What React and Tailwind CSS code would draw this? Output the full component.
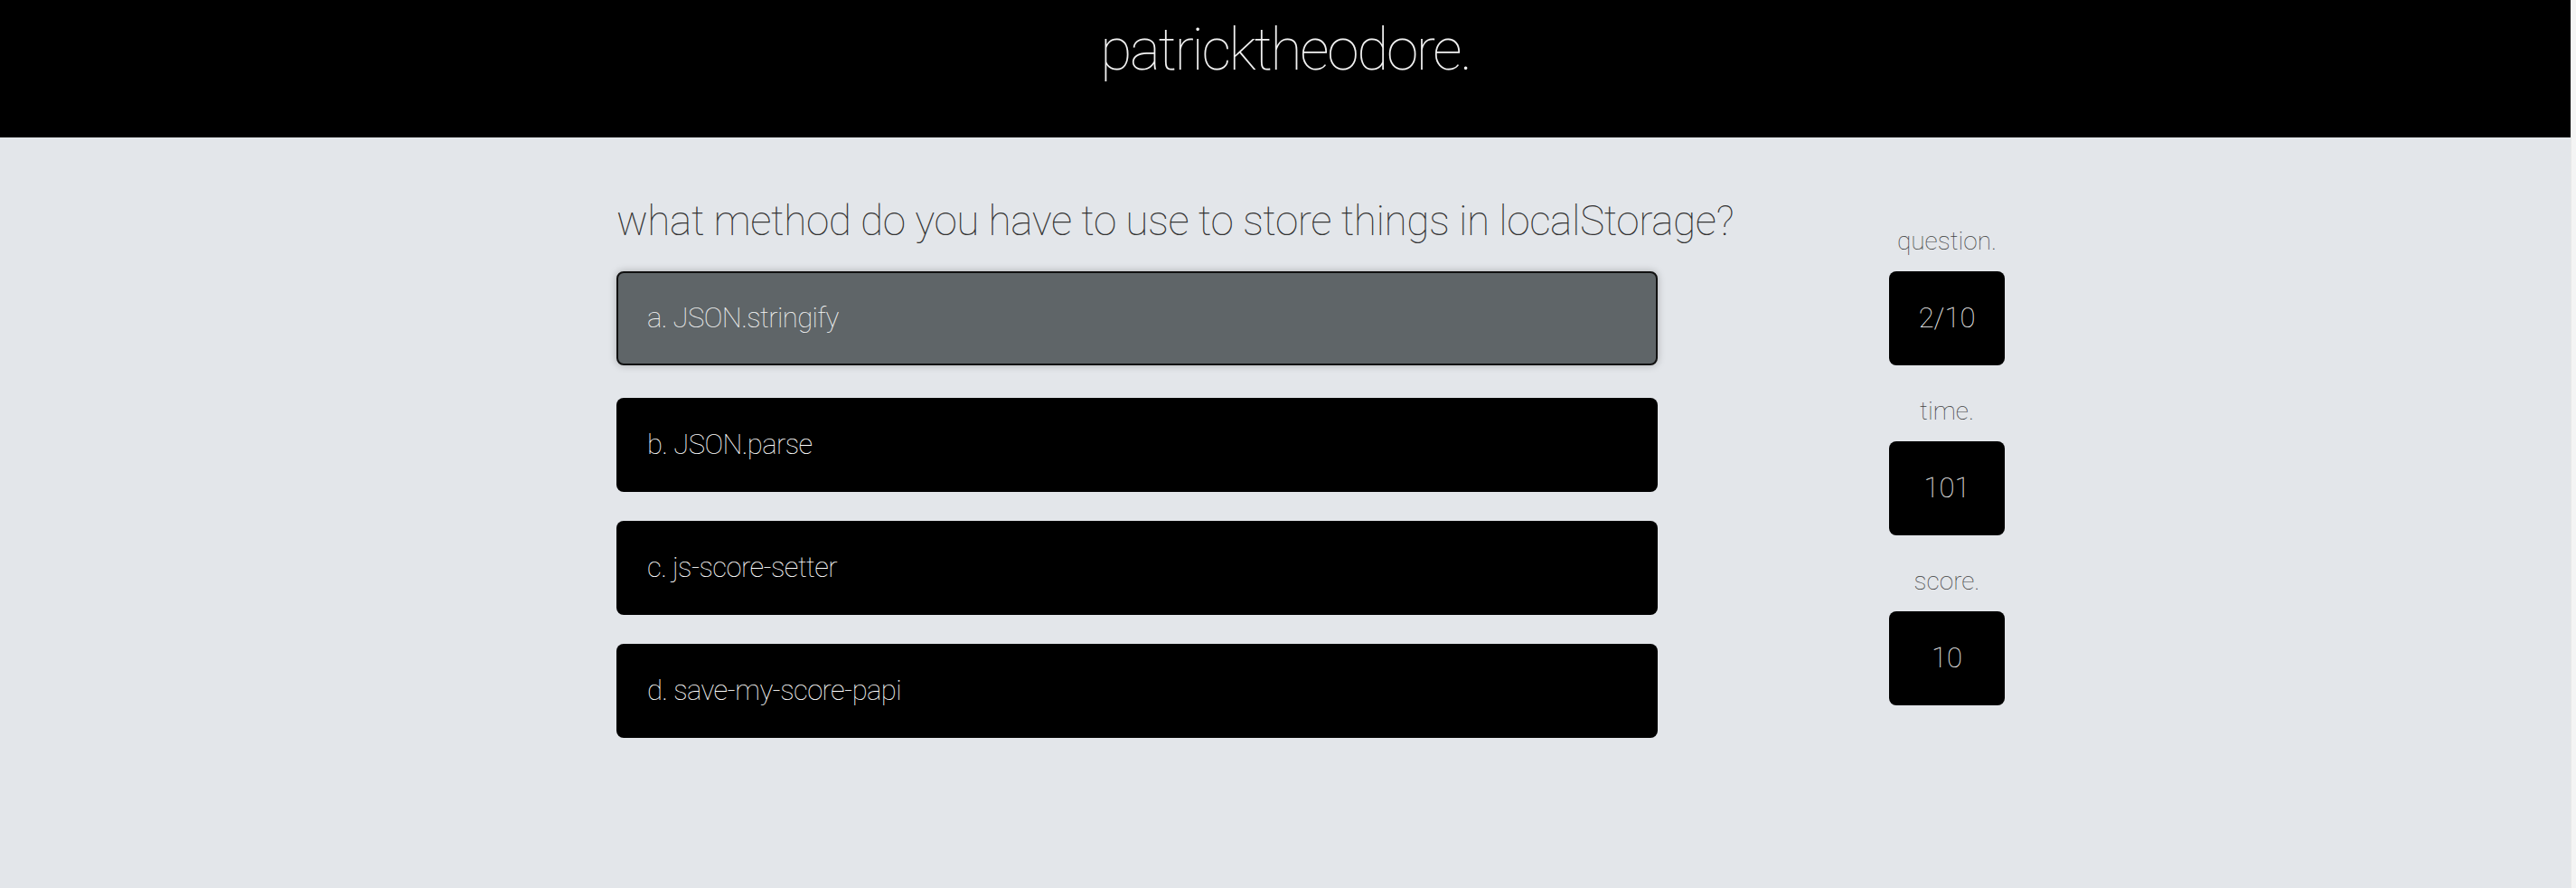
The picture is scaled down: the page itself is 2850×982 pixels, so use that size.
import React from "react";

const answers = [
  { label: "a. JSON.stringify", active: true },
  { label: "b. JSON.parse" },
  { label: "c. js-score-setter" },
  { label: "d. save-my-score-papi" },
];

const stats = [
  { label: "question.", value: "2/10" },
  { label: "time.", value: "101" },
  { label: "score.", value: "10" },
];

export default function App() {
  return (
    <div
      className="flex h-[982px] w-full overflow-hidden"
      style={{ fontFamily: "Roboto, 'Liberation Sans', sans-serif" }}
    >
      <div className="flex flex-1 flex-col bg-[#e3e6ea]">
        <header className="flex h-[152px] items-start justify-center bg-black">
          <h1 className="mt-[24px] text-[64px] font-thin leading-[64px] tracking-[-2.3px] text-[#f2f2f2]">
            patricktheodore.
          </h1>
        </header>
        <main className="flex justify-center pl-[56px]">
          <section className="flex w-[1152px] flex-col pt-[68px]">
            <h2 className="whitespace-nowrap text-[46px] font-thin leading-[48px] tracking-[-0.45px] text-[#333]">
              what method do you have to use to store things in localStorage?
            </h2>
            <div className="mt-[32px] flex flex-col gap-[32px]">
              {answers.map((a) =>
                a.active ? (
                  <button
                    key={a.label}
                    className="mb-[4px] flex h-[104px] items-center rounded-lg border-2 border-[#111] bg-[#5f6568] pl-[32px] text-left text-[31px] font-thin tracking-[-0.6px] text-[#f5f5f5] shadow-[0_0_8px_rgba(0,0,0,0.25)]"
                  >
                    {a.label}
                  </button>
                ) : (
                  <button
                    key={a.label}
                    className="flex h-[104px] items-center rounded-lg bg-black pl-[34px] text-left text-[31px] font-thin tracking-[-0.6px] text-white"
                  >
                    {a.label}
                  </button>
                )
              )}
            </div>
          </section>
          <aside className="ml-[256px] flex w-[128px] flex-col items-center gap-[37px] pt-[101px]">
            {stats.map((s) => (
              <div key={s.label} className="flex w-full flex-col items-center gap-[19px]">
                <span className="text-[28px] font-thin leading-[28px] text-[#444]">
                  {s.label}
                </span>
                <div className="flex h-[104px] w-[128px] items-center justify-center rounded-lg bg-black text-[31px] font-thin text-white">
                  {s.value}
                </div>
              </div>
            ))}
          </aside>
        </main>
      </div>
      <div className="w-[6px] border-l border-[#e8e8e8] bg-[#f4f4f4]" />
    </div>
  );
}
